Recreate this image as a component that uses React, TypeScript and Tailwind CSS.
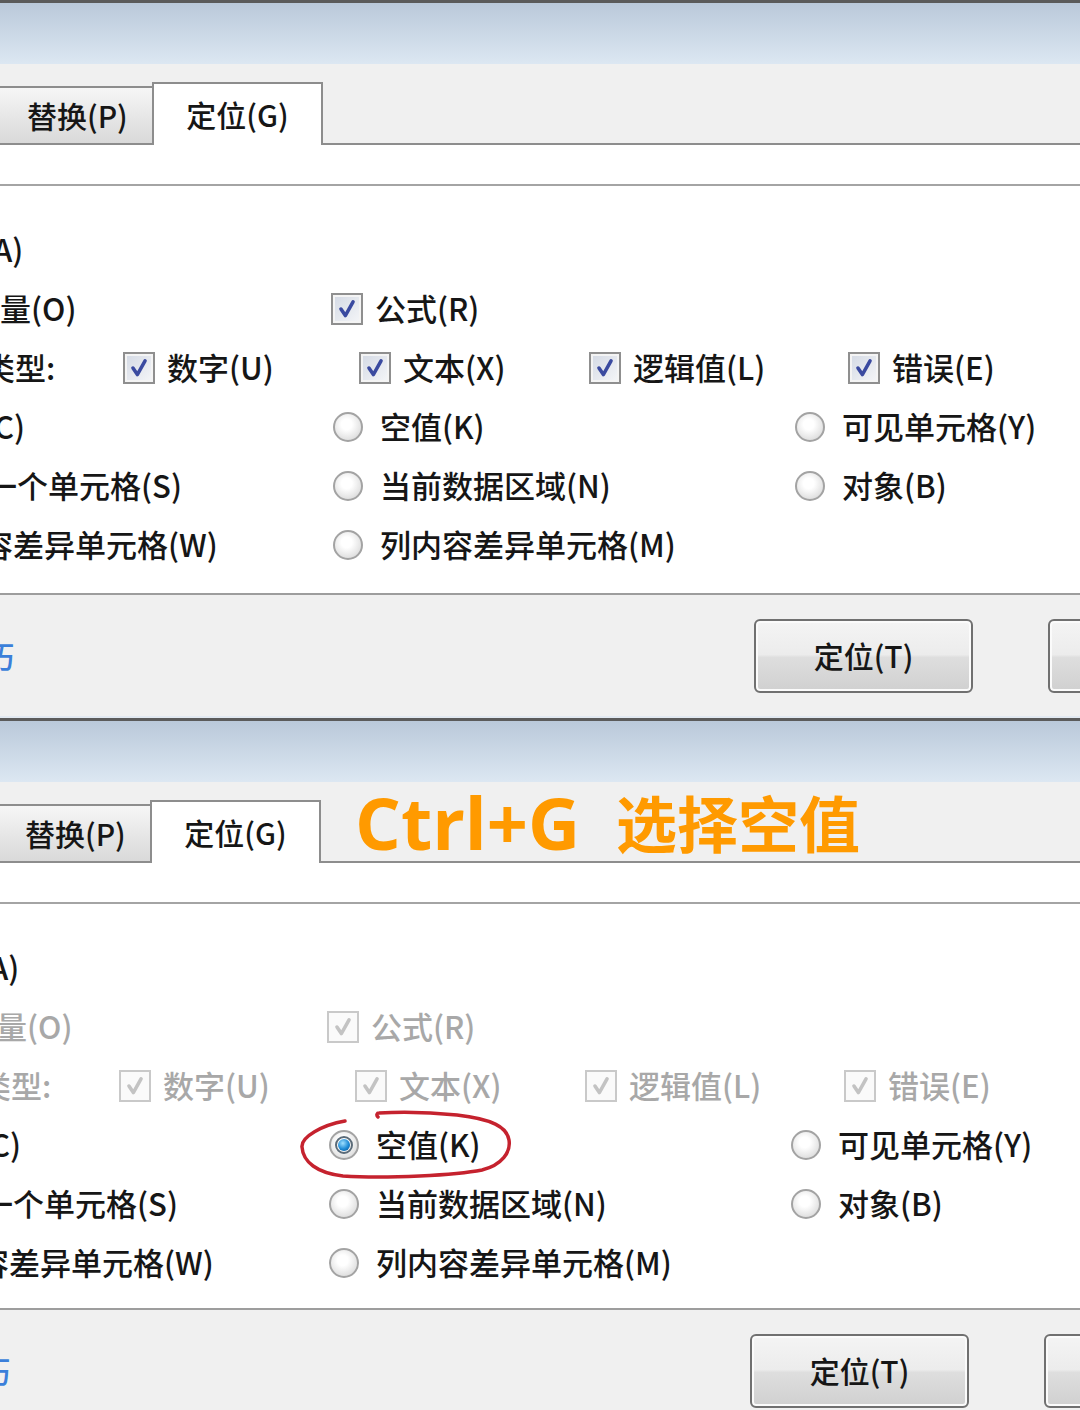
import clsx from "clsx";

// 勾选框（Win7 风格）
function CheckBox({ dim }: { dim?: boolean }) {
  return (
    <span
      className={clsx(
        "flex h-[32px] w-[32px] shrink-0 items-center justify-center border-2",
        dim
          ? "border-[#c9c9c9] bg-[#fafafa]"
          : "border-[#8f8f8f] bg-[linear-gradient(135deg,#d3d9e4,#f5f6f8)] shadow-[inset_0_0_0_2px_#f4f4f4]"
      )}
    >
      <svg viewBox="0 0 20 20" className="h-[22px] w-[22px]">
        <path
          d="M4.5 10 L8.5 16 L15.5 3.5"
          fill="none"
          stroke={dim ? "#c3c3c3" : "#3a4aa0"}
          strokeWidth={3.2}
          strokeLinecap="round"
          strokeLinejoin="round"
        />
      </svg>
    </span>
  );
}

// 单选按钮
function Radio({ on }: { on?: boolean }) {
  return (
    <span className="flex h-[30px] w-[30px] shrink-0 items-center justify-center rounded-full border-2 border-[#a3a3a3] bg-[radial-gradient(circle_at_45%_40%,#ffffff_25%,#d2d2d2_95%)]">
      {on && (
        <span className="flex h-[18px] w-[18px] items-center justify-center rounded-full border-2 border-[#5b6b78]">
          <span className="h-[12px] w-[12px] rounded-full bg-[radial-gradient(circle_at_40%_35%,#9fe0ff,#1c8ad6_55%,#0a4d85)]" />
        </span>
      )}
    </span>
  );
}

function CheckItem({ label, dim }: { label: string; dim?: boolean }) {
  return (
    <span className="flex items-center gap-[12px]">
      <CheckBox dim={dim} />
      <span className={dim ? "text-[#a8a8a8]" : "text-[#161616]"}>{label}</span>
    </span>
  );
}

function RadioItem({ label, on }: { label: string; on?: boolean }) {
  return (
    <span className="flex items-center gap-[17px]">
      <Radio on={on} />
      <span className="text-[#161616]">{label}</span>
    </span>
  );
}

// 手绘红圈
function RedCircle() {
  return (
    <svg
      viewBox="0 0 216 72"
      className="absolute left-[-32px] top-[-8px] h-[72px] w-[216px] overflow-visible"
    >
      <path
        d="M48 14 C25 18, 4 30, 5 40 C6 55, 20 66, 46 69 C90 72, 160 68, 185 63 C205 58, 214 45, 212 33 C210 20, 195 12, 160 8 C130 5, 100 5, 82 6 C80 6, 79 8, 81 10"
        fill="none"
        stroke="#c5222e"
        strokeWidth={3.5}
        strokeLinecap="round"
      />
    </svg>
  );
}

function Button({ label }: { label: string }) {
  return (
    <button className="flex h-[74px] w-[219px] shrink-0 items-center justify-center rounded-[6px] border-2 border-[#707070] bg-[linear-gradient(#f4f4f4,#ececec_48%,#dedede_52%,#d0d0d0)] text-[30px] text-[#161616] shadow-[inset_0_0_0_2px_#fbfbfb]">
      {label}
    </button>
  );
}

function Panel({ after }: { after?: boolean }) {
  const dim = !!after;
  const gray = dim ? "text-[#a8a8a8]" : "text-[#161616]";

  return (
    <section className={clsx("overflow-hidden font-medium", after ? "h-[692px]" : "h-[718px]")}>
      {/* 标题栏 */}
      <div className="h-[3px] bg-[#5b5b5b]" />
      <div className="h-[61px] bg-gradient-to-b from-[#bac9da] to-[#dce7f2]" />

      {/* 选项卡 */}
      <div className={clsx("flex h-[81px] items-end bg-[#f0f0f0] text-[30px] text-[#161616]", after && "-ml-[2px]")}>
        <div className="flex h-[59px] w-[157px] shrink-0 items-center border-2 border-l-0 border-[#8d8d8d] bg-gradient-to-b from-[#f6f6f6] to-[#d9d9d9] pl-[27px]">
          替换(P)
        </div>
        <div className="relative z-10 -ml-[5px] flex h-[63px] w-[171px] shrink-0 items-center justify-center border-2 border-b-0 border-[#8d8d8d] bg-white">
          定位(G)
        </div>
        <div className="flex h-full flex-1 items-center border-b-2 border-[#8d8d8d] pl-[34px]">
          {after && (
            <div className="flex items-center font-bold leading-none text-[#ff9a00]">
              <span className="font-['Open_Sans',sans-serif] text-[72px]">Ctrl+G</span>
              <span className="ml-[36px] text-[61px]">选择空值</span>
            </div>
          )}
        </div>
      </div>

      {/* 选项区 */}
      <div className="bg-white">
        <div className="h-[39px]" />
        <div className="h-[2px] bg-[#a4a4a4]" />
        <div
          className={clsx(
            "flex flex-col whitespace-nowrap pt-[34px] text-[31px]",
            after ? "-ml-[4px] pb-[16px]" : "pb-[19px]"
          )}
        >
          <div className="flex h-[59px] items-center">
            <span className="-ml-[80px] text-[#161616]">数据(A)</span>
          </div>

          <div className="flex h-[59px] items-center">
            <div className="flex w-[331px] shrink-0 items-center">
              <span className={clsx("-ml-[31px]", gray)}>常量(O)</span>
            </div>
            <CheckItem label="公式(R)" dim={dim} />
          </div>

          <div className="flex h-[59px] items-center">
            <div className="flex w-[123px] shrink-0 items-center">
              <span className={clsx("-ml-[78px]", gray)}>数据类型:</span>
            </div>
            <div className="w-[236px] shrink-0">
              <CheckItem label="数字(U)" dim={dim} />
            </div>
            <div className="w-[230px] shrink-0">
              <CheckItem label="文本(X)" dim={dim} />
            </div>
            <div className="w-[259px] shrink-0">
              <CheckItem label="逻辑值(L)" dim={dim} />
            </div>
            <CheckItem label="错误(E)" dim={dim} />
          </div>

          <div className="flex h-[59px] items-center">
            <div className="flex w-[333px] shrink-0 items-center">
              <span className="-ml-[79px] text-[#161616]">批注(C)</span>
            </div>
            <div className="relative flex h-full w-[462px] shrink-0 items-center">
              <RadioItem label="空值(K)" on={after} />
              {after && <RedCircle />}
            </div>
            <RadioItem label="可见单元格(Y)" />
          </div>

          <div className="flex h-[59px] items-center">
            <div className="flex w-[333px] shrink-0 items-center">
              <span className="-ml-[76px] text-[#161616]">最后一个单元格(S)</span>
            </div>
            <div className="w-[462px] shrink-0">
              <RadioItem label="当前数据区域(N)" />
            </div>
            <RadioItem label="对象(B)" />
          </div>

          <div className="flex h-[59px] items-center">
            <div className="flex w-[333px] shrink-0 items-center">
              <span className="-ml-[80px] text-[#161616]">行内容差异单元格(W)</span>
            </div>
            <RadioItem label="列内容差异单元格(M)" />
          </div>
        </div>
      </div>

      {/* 底部按钮 */}
      <div className="flex h-[123px] border-t-2 border-[#9d9d9d] bg-[#f0f0f0]">
        <div className={clsx("flex flex-1 items-center whitespace-nowrap", after && "-ml-[4px]")}>
          <div className="flex w-[754px] shrink-0 items-center">
            <span className="-ml-[46px] text-[30px] text-[#3b7fda]">技巧</span>
          </div>
          <Button label="定位(T)" />
          <div className="ml-[75px]">
            <Button label="关闭" />
          </div>
        </div>
      </div>
      <div className="h-[2px] bg-[#e2e9f1]" />
    </section>
  );
}

export default function App() {
  return (
    <div className="h-[1410px] w-[1080px] overflow-hidden bg-white font-['Noto_Sans_CJK_SC','Noto_Sans',sans-serif]">
      <Panel />
      <Panel after />
    </div>
  );
}
